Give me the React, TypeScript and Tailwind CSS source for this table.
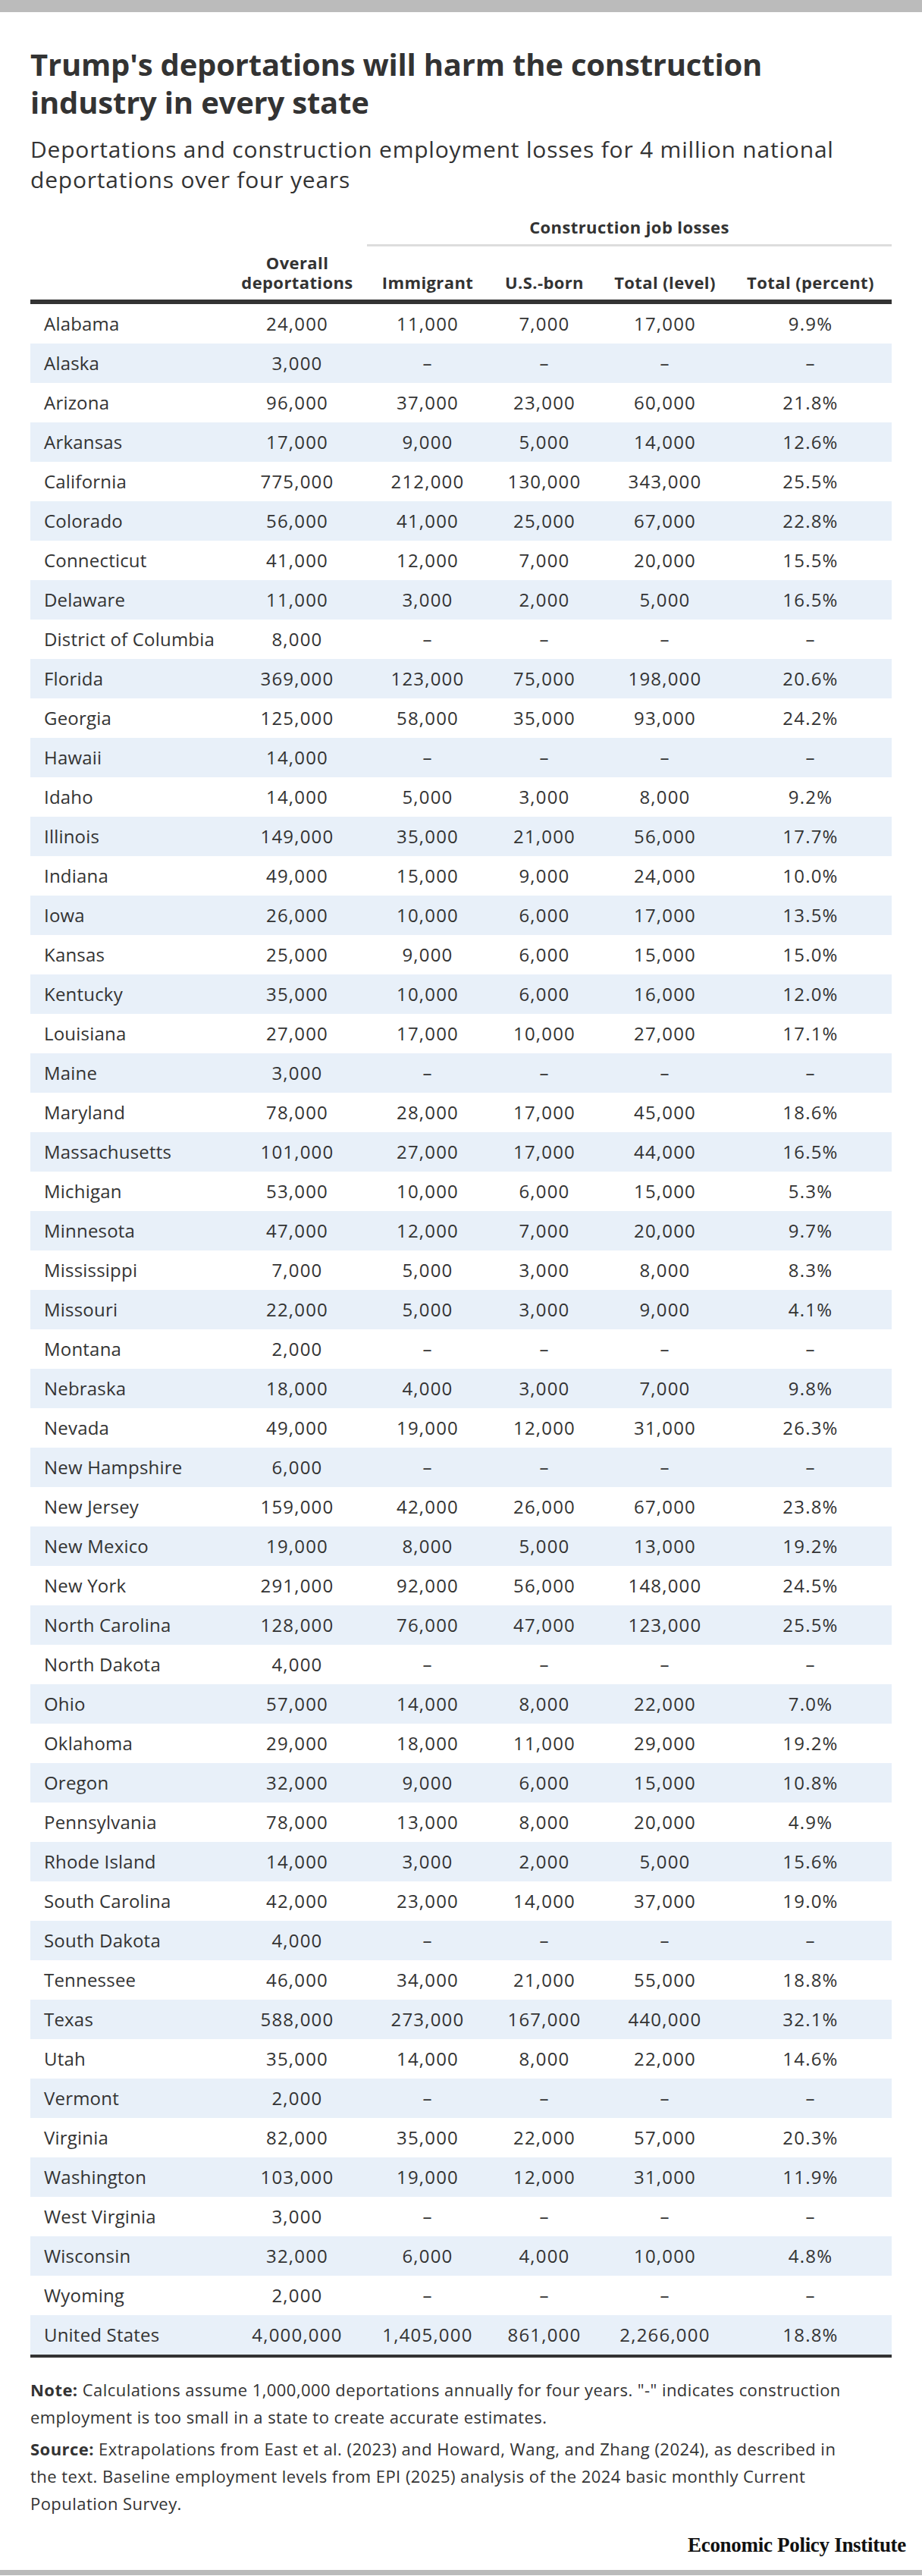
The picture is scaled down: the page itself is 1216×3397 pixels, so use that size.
const rows: [string, string, string, string, string, string][] = [
  ['Alabama', '24,000', '11,000', '7,000', '17,000', '9.9%'],
  ['Alaska', '3,000', '–', '–', '–', '–'],
  ['Arizona', '96,000', '37,000', '23,000', '60,000', '21.8%'],
  ['Arkansas', '17,000', '9,000', '5,000', '14,000', '12.6%'],
  ['California', '775,000', '212,000', '130,000', '343,000', '25.5%'],
  ['Colorado', '56,000', '41,000', '25,000', '67,000', '22.8%'],
  ['Connecticut', '41,000', '12,000', '7,000', '20,000', '15.5%'],
  ['Delaware', '11,000', '3,000', '2,000', '5,000', '16.5%'],
  ['District of Columbia', '8,000', '–', '–', '–', '–'],
  ['Florida', '369,000', '123,000', '75,000', '198,000', '20.6%'],
  ['Georgia', '125,000', '58,000', '35,000', '93,000', '24.2%'],
  ['Hawaii', '14,000', '–', '–', '–', '–'],
  ['Idaho', '14,000', '5,000', '3,000', '8,000', '9.2%'],
  ['Illinois', '149,000', '35,000', '21,000', '56,000', '17.7%'],
  ['Indiana', '49,000', '15,000', '9,000', '24,000', '10.0%'],
  ['Iowa', '26,000', '10,000', '6,000', '17,000', '13.5%'],
  ['Kansas', '25,000', '9,000', '6,000', '15,000', '15.0%'],
  ['Kentucky', '35,000', '10,000', '6,000', '16,000', '12.0%'],
  ['Louisiana', '27,000', '17,000', '10,000', '27,000', '17.1%'],
  ['Maine', '3,000', '–', '–', '–', '–'],
  ['Maryland', '78,000', '28,000', '17,000', '45,000', '18.6%'],
  ['Massachusetts', '101,000', '27,000', '17,000', '44,000', '16.5%'],
  ['Michigan', '53,000', '10,000', '6,000', '15,000', '5.3%'],
  ['Minnesota', '47,000', '12,000', '7,000', '20,000', '9.7%'],
  ['Mississippi', '7,000', '5,000', '3,000', '8,000', '8.3%'],
  ['Missouri', '22,000', '5,000', '3,000', '9,000', '4.1%'],
  ['Montana', '2,000', '–', '–', '–', '–'],
  ['Nebraska', '18,000', '4,000', '3,000', '7,000', '9.8%'],
  ['Nevada', '49,000', '19,000', '12,000', '31,000', '26.3%'],
  ['New Hampshire', '6,000', '–', '–', '–', '–'],
  ['New Jersey', '159,000', '42,000', '26,000', '67,000', '23.8%'],
  ['New Mexico', '19,000', '8,000', '5,000', '13,000', '19.2%'],
  ['New York', '291,000', '92,000', '56,000', '148,000', '24.5%'],
  ['North Carolina', '128,000', '76,000', '47,000', '123,000', '25.5%'],
  ['North Dakota', '4,000', '–', '–', '–', '–'],
  ['Ohio', '57,000', '14,000', '8,000', '22,000', '7.0%'],
  ['Oklahoma', '29,000', '18,000', '11,000', '29,000', '19.2%'],
  ['Oregon', '32,000', '9,000', '6,000', '15,000', '10.8%'],
  ['Pennsylvania', '78,000', '13,000', '8,000', '20,000', '4.9%'],
  ['Rhode Island', '14,000', '3,000', '2,000', '5,000', '15.6%'],
  ['South Carolina', '42,000', '23,000', '14,000', '37,000', '19.0%'],
  ['South Dakota', '4,000', '–', '–', '–', '–'],
  ['Tennessee', '46,000', '34,000', '21,000', '55,000', '18.8%'],
  ['Texas', '588,000', '273,000', '167,000', '440,000', '32.1%'],
  ['Utah', '35,000', '14,000', '8,000', '22,000', '14.6%'],
  ['Vermont', '2,000', '–', '–', '–', '–'],
  ['Virginia', '82,000', '35,000', '22,000', '57,000', '20.3%'],
  ['Washington', '103,000', '19,000', '12,000', '31,000', '11.9%'],
  ['West Virginia', '3,000', '–', '–', '–', '–'],
  ['Wisconsin', '32,000', '6,000', '4,000', '10,000', '4.8%'],
  ['Wyoming', '2,000', '–', '–', '–', '–'],
  ['United States', '4,000,000', '1,405,000', '861,000', '2,266,000', '18.8%'],
];

// column widths add up to the 1136px table
const cols = ['w-[260px]', 'w-[184px]', 'w-[160px]', 'w-[148px]', 'w-[170px]', 'w-[214px]'];

export default function App() {
  return (
    <div className="w-[1216px] bg-white text-[#333] font-['Open_Sans','Liberation_Sans',sans-serif]">
      <div className="h-4 bg-[#bbbbbb]" />

      <div className="px-10">
        {/* Title */}
        <h1 className="mt-11 text-[40px] leading-[50px] font-bold tracking-[-0.2px]">
          Trump's deportations will harm the construction
          <br />
          industry in every state
        </h1>
        <p className="mt-[17px] text-[30px] leading-[40px] tracking-[0.8px] whitespace-nowrap">
          Deportations and construction employment losses for 4 million national
          <br />
          deportations over four years
        </p>

        {/* Table */}
        <div className="mt-[30px]">
          <div className="flex">
            <div className="w-[444px]" />
            <div className="flex-1 flex flex-col items-center">
              <div className="text-[22px] leading-6 font-bold tracking-[0.4px]">Construction job losses</div>
              <div className="mt-[11px] h-[3px] w-full bg-[#dddddd]" />
            </div>
          </div>

          <div className="flex items-end pt-2 pb-[10px] text-[22px] leading-[26px] font-bold text-center tracking-[0.4px]">
            <div className={cols[0]} />
            <div className={cols[1]}>
              Overall
              <br />
              deportations
            </div>
            <div className={cols[2]}>Immigrant</div>
            <div className={cols[3]}>U.S.-born</div>
            <div className={cols[4]}>Total (level)</div>
            <div className={cols[5]}>Total (percent)</div>
          </div>
          <div className="h-[6px] bg-[#333]" />

          {rows.map((r, i) => (
            <div
              key={r[0]}
              className={`flex items-center h-[52px] text-[24px] ${i % 2 === 1 ? 'bg-[#e8f0f9]' : 'bg-white'}`}
            >
              <div className={`${cols[0]} pl-[18px] tracking-[0.2px]`}>{r[0]}</div>
              <div className={`${cols[1]} text-center tracking-[1.2px]`}>{r[1]}</div>
              <div className={`${cols[2]} text-center tracking-[1.2px]`}>{r[2]}</div>
              <div className={`${cols[3]} text-center tracking-[1.2px]`}>{r[3]}</div>
              <div className={`${cols[4]} text-center tracking-[1.2px]`}>{r[4]}</div>
              <div className={`${cols[5]} text-center tracking-[1.2px]`}>{r[5]}</div>
            </div>
          ))}
          <div className="h-1 bg-[#333]" />
        </div>

        {/* Notes */}
        <div className="mt-6 text-[22px] leading-[36px] tracking-[0.45px] whitespace-nowrap">
          <p>
            <span className="font-bold">Note:</span> Calculations assume 1,000,000 deportations annually for four years. "-" indicates construction
            <br />
            employment is too small in a state to create accurate estimates.
          </p>
          <p className="mt-[6px]">
            <span className="font-bold">Source:</span> Extrapolations from East et al. (2023) and Howard, Wang, and Zhang (2024), as described in
            <br />
            the text. Baseline employment levels from EPI (2025) analysis of the 2024 basic monthly Current
            <br />
            Population Survey.
          </p>
        </div>
      </div>

      <div className="mt-5 pr-[21px] flex justify-end">
        <span className="font-['Liberation_Serif',serif] font-bold text-[27px] leading-[34px] tracking-[-0.3px] text-[#111]">
          Economic Policy Institute
        </span>
      </div>
      <div className="mt-4 h-[7px] bg-[#bbbbbb]" />
    </div>
  );
}
